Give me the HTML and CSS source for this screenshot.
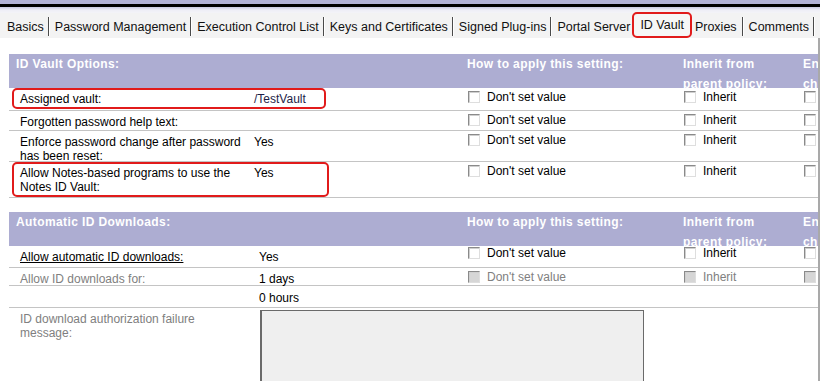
FILE: index.html
```html
<html><head><meta charset="UTF-8">
<meta name="viewport" content="width=device-width, initial-scale=1.0">
<title>Policy Settings - ID Vault</title>
<link rel="stylesheet" href="styles.css">
</head>
<body>
    <div class="topbar"></div>
    <div class="tabs">
        <div class="tab">Basics</div>
        <div class="tab">Password Management</div>
        <div class="tab">Execution Control List</div>
        <div class="tab">Keys and Certificates</div>
        <div class="tab">Signed Plug-ins</div>
        <div class="tab no-sep">Portal Server</div>
        <div class="tab active">ID Vault</div>
        <div class="tab">Proxies</div>
        <div class="tab">Comments</div>
    </div>

    <div class="content">
        <div class="section">
            <div class="sec-head">
                <div class="h-label">ID Vault Options:</div>
                <div></div>
                <div class="h-col">How to apply this setting:</div>
                <div class="h-col">Inherit from<br>parent policy:</div>
                <div class="h-col">Enforce in<br>child policies:</div>
            </div>
            <div class="row h23">
                <span class="mark"></span>
                <div class="label">Assigned vault:</div>
                <div class="value vault">/TestVault</div>
                <div class="opt"><input type="checkbox" class="cb"> Don't set value</div>
                <div class="opt"><input type="checkbox" class="cb"> Inherit</div>
                <div class="opt"><input type="checkbox" class="cb"></div>
            </div>
            <div class="row h20">
                <div class="label">Forgotten password help text:</div>
                <div class="value"></div>
                <div class="opt"><input type="checkbox" class="cb"> Don't set value</div>
                <div class="opt"><input type="checkbox" class="cb"> Inherit</div>
                <div class="opt"><input type="checkbox" class="cb"></div>
            </div>
            <div class="row h31">
                <div class="label">Enforce password change after password has been reset:</div>
                <div class="value">Yes</div>
                <div class="opt"><input type="checkbox" class="cb"> Don't set value</div>
                <div class="opt"><input type="checkbox" class="cb"> Inherit</div>
                <div class="opt"><input type="checkbox" class="cb"></div>
            </div>
            <div class="row h36">
                <span class="mark"></span>
                <div class="label">Allow Notes-based programs to use the Notes ID Vault:</div>
                <div class="value">Yes</div>
                <div class="opt"><input type="checkbox" class="cb"> Don't set value</div>
                <div class="opt"><input type="checkbox" class="cb"> Inherit</div>
                <div class="opt"><input type="checkbox" class="cb"></div>
            </div>
        </div>

        <div class="section second">
            <div class="sec-head">
                <div class="h-label">Automatic ID Downloads:</div>
                <div></div>
                <div class="h-col">How to apply this setting:</div>
                <div class="h-col">Inherit from<br>parent policy:</div>
                <div class="h-col">Enforce in<br>child policies:</div>
            </div>
            <div class="row h22">
                <div class="label"><u>Allow automatic ID downloads:</u></div>
                <div class="value">Yes</div>
                <div class="opt"><input type="checkbox" class="cb"> Don't set value</div>
                <div class="opt"><input type="checkbox" class="cb"> Inherit</div>
                <div class="opt"><input type="checkbox" class="cb"></div>
            </div>
            <div class="row h18 disabled">
                <div class="label">Allow ID downloads for:</div>
                <div class="value">1 days</div>
                <div class="opt"><input type="checkbox" class="cb" disabled> Don't set value</div>
                <div class="opt"><input type="checkbox" class="cb" disabled> Inherit</div>
                <div class="opt"><input type="checkbox" class="cb" disabled></div>
            </div>
            <div class="row h22">
                <div class="label"></div>
                <div class="value hours">0 hours</div>
                <div class="opt"></div>
                <div class="opt"></div>
                <div class="opt"></div>
            </div>
            <div class="row last disabled">
                <div class="label">ID download authorization failure message:</div>
                <div class="value wide"><textarea class="message"></textarea></div>
            </div>
        </div>
    </div>
</body>
</html>
```

FILE: styles.css
```css
:root {
    --band-color: #adadd2;
    --line-color: #c4c4c4;
    --muted-color: #808080;
    --red-mark: #e11b1b;
}

body {
    margin: 0;
    padding: 0;
    height: 381px;
    background-color: #ffffff;
    font-family: 'Liberation Sans', Arial, sans-serif;
    font-size: 12px;
    color: #000000;
    overflow: hidden;
}

.topbar {
    height: 13px;
    background: linear-gradient(to bottom,
        #b2b2d6 0, #b2b2d6 4px,
        #000000 4px, #000000 7px,
        #c9c9e2 7px, #eeeef6 10px, #f4f4f8 13px);
}

.tabs {
    display: flex;
    height: 25px;
    background-color: #f3f3f3;
    font-size: 12.5px;
}

.tab {
    display: flex;
    align-items: center;
    margin: 4px 0 2px;
    padding: 0 4px 0 6px;
    border-right: 1px solid #4a4a4a;
    box-shadow: 1px 0 0 #ffffff;
    color: #111111;
    white-space: nowrap;
}

.tab:first-child {
    padding-left: 7px;
}

.tab.no-sep {
    border-right: none;
    box-shadow: none;
    padding-right: 2px;
}

.tab.active {
    margin: -1px 0 0 0;
    padding: 0 6px;
    border: 2px solid var(--red-mark);
    border-radius: 5px;
    box-shadow: none;
    background-color: #f6f6f6;
}

.tab.active + .tab {
    padding-left: 3px;
    padding-right: 5px;
}

.content {
    box-sizing: border-box;
    padding: 16px 0 0 9px;
    width: 820px;
    height: 343px;
    overflow: hidden;
    border-right: 2px solid #a9a9a9;
}

.section {
    overflow: hidden;
}

.section.second {
    margin-top: 14px;
}

.sec-head,
.row {
    display: grid;
    grid-template-columns: 244px 213px 216px 120px 1fr;
}

.sec-head {
    height: 34px;
    overflow: hidden;
    background-color: var(--band-color);
    color: #ffffff;
    font-weight: bold;
    letter-spacing: 0.4px;
    line-height: 20px;
}

.h-label {
    padding-left: 7px;
}

.h-col {
    padding-left: 1px;
    white-space: nowrap;
    overflow: hidden;
}

.row {
    position: relative;
    box-sizing: border-box;
    border-bottom: 1px solid var(--line-color);
    line-height: 14px;
}

.h18 { height: 18px; }
.h20 { height: 20px; }
.h22 { height: 22px; }
.h23 { height: 23px; }
.h31 { height: 31px; }
.h36 { height: 36px; }

.label {
    padding: 4px 6px 0 11px;
}

.value {
    padding: 4px 0 0 1px;
}

.value.vault {
    color: #1e1e48;
}

.section.second .value {
    padding-left: 6px;
}

.value.hours {
    padding-top: 5px;
}

.opt {
    display: flex;
    align-items: flex-start;
    gap: 6px;
    padding: 2px 0 0 2px;
    white-space: nowrap;
    overflow: hidden;
}

.section.second .opt {
    padding-top: 0;
}

.section.second .disabled .opt {
    padding-top: 2px;
}

.cb {
    appearance: none;
    -webkit-appearance: none;
    flex-shrink: 0;
    margin: 1px 1px 0 0;
    width: 12px;
    height: 12px;
    box-sizing: border-box;
    border: 1px solid;
    border-color: #8a8a8a #dedede #dedede #8a8a8a;
    box-shadow: inset 1px 1px 0 #cfcfcf;
    background-color: #ffffff;
}

.cb:disabled {
    background-color: #d6d6d6;
}

.disabled .label,
.disabled .opt {
    color: var(--muted-color);
}

.row.last {
    border-bottom: none;
    height: 90px;
}

.value.wide {
    grid-column: 2 / 5;
    padding-top: 2px;
}

.message {
    display: block;
    width: 384px;
    height: 90px;
    margin: 0 0 0 1px;
    box-sizing: border-box;
    border: 1px solid #6a6a6a;
    border-left-width: 2px;
    background-color: #efefef;
    resize: none;
}

.mark {
    position: absolute;
    left: 3px;
    top: 0;
    width: 314px;
    bottom: 1px;
    box-sizing: border-box;
    border: 2px solid var(--red-mark);
    border-radius: 5px;
    pointer-events: none;
}

.row.h36 .mark {
    width: 317px;
    bottom: 0;
}
```
